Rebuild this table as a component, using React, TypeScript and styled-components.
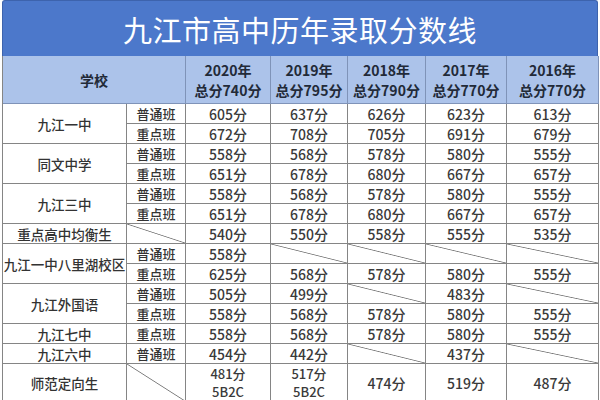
import React from "react";
import styled, { createGlobalStyle, css } from "styled-components";

const GlobalStyle = createGlobalStyle`
    html, body {
        margin: 0;
        padding: 0;
        background: #ffffff;
        font-family: "Noto Sans CJK SC", "Noto Sans", sans-serif;
    }
`;

const Page = styled.div`
    width: 596px;
    padding: 0 2px;
    height: 400px;
    overflow: hidden;
`;

const TitleBar = styled.div`
    height: 56px;
    box-sizing: border-box;
    display: flex;
    align-items: center;
    justify-content: center;
    background: #4c78cb;
    border: 1px solid #3d63ad;
    border-bottom: none;
    border-radius: 3px 3px 0 0;
    color: #ffffff;
    font-size: 29px;
    letter-spacing: 0.5px;
`;

const Grid = styled.div`
    display: grid;
    grid-template-columns: 124px 59px 85px 77px 78px 81px 92px;
    grid-template-rows: 48px repeat(13, 20px) 38px;
    border-left: 1px solid #858585;
`;

const diagonal = css`
    background: linear-gradient(
        to top right,
        transparent calc(50% - 0.8px),
        #7a7a7a 50%,
        transparent calc(50% + 0.8px)
    );
`;

const Cell = styled.div<{ $span?: number; $diag?: boolean }>`
    box-sizing: border-box;
    display: flex;
    flex-direction: column;
    align-items: center;
    justify-content: center;
    border-right: 1px solid #858585;
    border-bottom: 1px solid #858585;
    color: #3a3a3a;
    font-size: 14px;
    font-weight: 500;
    line-height: 18px;
    white-space: nowrap;
    ${(p) => p.$span && `grid-row: span ${p.$span};`}
    ${(p) => p.$diag && diagonal}
`;

const PairCell = styled(Cell)`
    font-size: 13px;
`;

const HeadCell = styled(Cell)<{ $wide?: boolean }>`
    background: #acc3ea;
    border-color: #7f93b8;
    color: #222a38;
    font-weight: 700;
    font-size: 14px;
    line-height: 20px;
    ${(p) => p.$wide && "grid-column: span 2;"}
`;

const SchoolCell = styled(Cell)`
    font-size: 13.5px;
    color: #333333;
`;

const ClassCell = styled(Cell)`
    font-size: 13px;
    color: #333333;
`;

type Val = string | string[] | null;
type Row = { cls: string | null; v: Val[] };
type School = { name: string; rows: Row[] };

const years = [
    ["2020年", "总分740分"],
    ["2019年", "总分795分"],
    ["2018年", "总分790分"],
    ["2017年", "总分770分"],
    ["2016年", "总分770分"],
];

const schools: School[] = [
    {
        name: "九江一中",
        rows: [
            { cls: "普通班", v: ["605分", "637分", "626分", "623分", "613分"] },
            { cls: "重点班", v: ["672分", "708分", "705分", "691分", "679分"] },
        ],
    },
    {
        name: "同文中学",
        rows: [
            { cls: "普通班", v: ["558分", "568分", "578分", "580分", "555分"] },
            { cls: "重点班", v: ["651分", "678分", "680分", "667分", "657分"] },
        ],
    },
    {
        name: "九江三中",
        rows: [
            { cls: "普通班", v: ["558分", "568分", "578分", "580分", "555分"] },
            { cls: "重点班", v: ["651分", "678分", "680分", "667分", "657分"] },
        ],
    },
    {
        name: "重点高中均衡生",
        rows: [{ cls: null, v: ["540分", "550分", "558分", "555分", "535分"] }],
    },
    {
        name: "九江一中八里湖校区",
        rows: [
            { cls: "普通班", v: ["558分", null, null, null, null] },
            { cls: "重点班", v: ["625分", "568分", "578分", "580分", "555分"] },
        ],
    },
    {
        name: "九江外国语",
        rows: [
            { cls: "普通班", v: ["505分", "499分", null, "483分", null] },
            { cls: "重点班", v: ["558分", "568分", "578分", "580分", "555分"] },
        ],
    },
    {
        name: "九江七中",
        rows: [{ cls: "重点班", v: ["558分", "568分", "578分", "580分", "555分"] }],
    },
    {
        name: "九江六中",
        rows: [{ cls: "普通班", v: ["454分", "442分", null, "437分", null] }],
    },
    {
        name: "师范定向生",
        rows: [
            {
                cls: null,
                v: [["481分", "5B2C"], ["517分", "5B2C"], "474分", "519分", "487分"],
            },
        ],
    },
];

function ValueCell({ v }: { v: Val }) {
    if (v === null) return <Cell $diag />;
    if (Array.isArray(v)) {
        return (
            <PairCell>
                {v.map((t) => (
                    <span key={t}>{t}</span>
                ))}
            </PairCell>
        );
    }
    return <Cell>{v}</Cell>;
}

function App() {
    return (
        <Page>
            <GlobalStyle />
            <TitleBar>九江市高中历年录取分数线</TitleBar>
            <Grid>
                <HeadCell $wide>学校</HeadCell>
                {years.map(([y, t]) => (
                    <HeadCell key={y}>
                        <span>{y}</span>
                        <span>{t}</span>
                    </HeadCell>
                ))}
                {schools.map((s) => (
                    <React.Fragment key={s.name}>
                        <SchoolCell $span={s.rows.length}>{s.name}</SchoolCell>
                        {s.rows.map((r, i) => (
                            <React.Fragment key={i}>
                                {r.cls ? <ClassCell>{r.cls}</ClassCell> : <ClassCell $diag />}
                                {r.v.map((v, j) => (
                                    <ValueCell key={j} v={v} />
                                ))}
                            </React.Fragment>
                        ))}
                    </React.Fragment>
                ))}
            </Grid>
        </Page>
    );
}

export default App;
